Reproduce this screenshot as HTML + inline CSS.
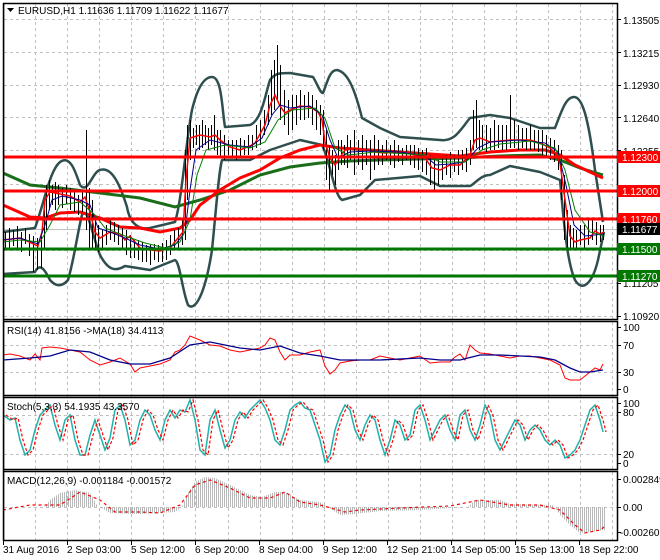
<!DOCTYPE html>
<html><head><meta charset="utf-8"><style>
html,body{margin:0;padding:0;background:#fff;}
svg{display:block;font-family:"Liberation Sans",sans-serif;}
</style></head><body>
<svg width="660" height="560" viewBox="0 0 660 560" xmlns="http://www.w3.org/2000/svg">
<defs>
<pattern id="hist" width="2" height="10" patternUnits="userSpaceOnUse"><rect x="0" y="0" width="1" height="10" fill="#b8b8b8"/></pattern>
<path id="st" d="M3,415 L10,420 L15,418 L20,440 L25,455 L30,450 L35,430 L40,415 L45,410 L50,405 L55,425 L60,440 L65,420 L70,415 L75,440 L80,455 L85,455 L90,435 L95,420 L100,435 L105,450 L110,438 L115,410 L120,405 L125,420 L130,445 L135,440 L140,420 L145,410 L150,415 L155,430 L160,440 L165,420 L170,410 L175,418 L180,410 L185,412 L190,400 L195,420 L200,450 L205,455 L210,420 L215,410 L220,430 L225,448 L230,440 L235,420 L240,412 L245,418 L250,410 L255,405 L260,400 L265,408 L270,420 L275,440 L280,445 L285,430 L290,410 L295,405 L300,402 L305,408 L310,410 L315,425 L320,440 L325,462 L330,455 L335,430 L340,415 L345,405 L350,410 L355,430 L360,440 L365,425 L370,415 L375,420 L380,440 L385,455 L390,440 L395,420 L400,425 L405,440 L410,435 L415,410 L420,405 L425,420 L430,440 L435,430 L440,420 L445,415 L450,430 L455,440 L460,415 L465,410 L470,430 L475,440 L480,425 L485,405 L490,415 L495,440 L500,450 L505,440 L510,430 L515,420 L520,425 L525,440 L530,430 L535,425 L540,430 L545,440 L550,445 L555,440 L560,445 L565,458 L570,455 L575,450 L580,440 L585,425 L590,410 L595,405 L600,420 L603,432"/>
</defs>
<rect width="660" height="560" fill="#fff"/>
<g stroke="#c0c0c0" stroke-dasharray="3,3" stroke-width="1">
<path d="M35.5 4V540M67.5 4V540M99.5 4V540M131.5 4V540M163.5 4V540M195.5 4V540M228.5 4V540M260.5 4V540M292.5 4V540M324.5 4V540M356.5 4V540M388.5 4V540M420.5 4V540M452.5 4V540M484.5 4V540M516.5 4V540M548.5 4V540M580.5 4V540M612.5 4V540"/>
<path d="M4 19.5H617M4 52.5H617M4 85.5H617M4 117.5H617M4 150.5H617M4 184.5H617M4 217.5H617M4 250.5H617M4 283.5H617M4 316.5H617"/>
<path d="M4 345.5H617M4 372.5H617M4 415.5H617M4 454.5H617M4 507.5H617"/>
</g>
<path d="M4 229.5H617" stroke="#c0c0c0"/>
<g fill="none" stroke="#2f4f4f" stroke-width="2.5" stroke-linejoin="round">
<path d="M3,232 L35,228 C45,200 50,170 60,162 C70,155 75,170 80,185 C88,195 92,172 100,170 C112,166 120,185 127,207 C130,225 140,230 150,228 L175,222 C182,200 186,140 192,110 C198,85 205,77 212,77 C222,77 222,110 225,127 L250,125 C262,120 265,95 270,80 C275,73 280,73 290,73 L313,77 C318,85 320,93 323,93 C328,80 330,70 337,70 C348,72 355,90 362,118 L380,128 L400,137 L440,140 C455,142 460,130 470,118 L490,115 L510,118 L540,128 L555,128 C562,110 566,97 574,97 C582,97 588,115 595,170 L603,222"/>
<path d="M3,274 L35,272 C40,262 45,270 50,280 C56,287 62,287 68,280 C74,260 78,230 82,215 C88,205 92,235 100,255 C108,270 115,272 125,266 L150,270 L175,260 C180,262 182,290 188,305 C195,312 205,295 212,250 C216,210 219,170 222,160 L250,160 L270,150 L300,140 L322,145 C330,160 334,195 342,200 L360,195 L375,180 L420,176 L440,186 L470,186 C474,185 480,175 490,175 L510,166 L540,172 L560,180 C563,210 566,260 575,280 C582,292 592,285 598,260 L604,232"/>
</g>
<path d="M3,173 L30,185 L60,188 L100,193 L140,198 L175,207 L200,200 L230,190 L260,175 L290,167 L320,163 L350,161 L380,160 L420,159 L460,158 L500,156 L540,155 L560,160 L580,168 L603,175" fill="none" stroke="#1a6e1a" stroke-width="3"/>
<path d="M3,205 L30,217 L45,218 L60,213 L80,212 L100,218 L120,227 L140,228 L160,232 L180,228 L190,220 L200,205 L220,190 L240,178 L260,170 L280,158 L300,150 L320,145 L340,148 L370,150 L400,152 L430,154 L460,156 L490,152 L520,150 L545,150 L560,155 L575,165 L590,172 L603,178" fill="none" stroke="#f00" stroke-width="3"/>
<g stroke="#000" stroke-width="1" transform="translate(0.5,0)">
<path d="M5 232V250M9 228V248M13 230V246M17 226V250M21 232V252M25 228V244M29 234V256M33 236V272M37 238V270M41 236V268M44 210V250M46 185V230M49 180V210M52 185V205M55 182V210M58 185V205M62 188V208M66 185V204M70 188V210M74 190V212M78 195V215M82 192V212M86 130V230M89 188V250M92 200V248M95 220V250M98 225V252M102 230V250M106 225V245M110 220V240M114 222V242M118 225V245M122 228V250M126 230V255M130 235V258M134 240V258M138 240V260M142 242V262M146 245V262M150 245V265M154 244V260M158 245V262M162 243V262M166 240V260M170 235V255M174 230V250M178 228V248M182 220V245M185 150V240M187 125V200M190 120V160M193 128V148M196 125V145M199 125V150M202 120V148M205 125V145M208 128V150M211 125V145M214 115V150M217 130V155M220 130V158M224 135V160M228 140V155M232 140V158M236 140V160M240 138V158M244 140V155M248 135V155M252 135V150M256 125V148M260 120V145M264 110V135M268 95V125M271 70V115M274 60V110M277 45V100M280 65V120M284 90V125M288 100V135M292 95V130M296 95V125M300 90V120M304 95V120M308 92V118M312 95V125M316 100V130M320 105V135M323 110V150M326 130V180M329 145V190M332 150V175M335 155V185M338 140V170M341 140V165M344 145V165M347 135V168M350 140V160M354 130V175M358 140V165M362 135V170M366 140V165M370 140V180M374 135V170M378 140V165M382 145V165M386 140V160M390 145V165M394 140V168M398 145V162M402 148V165M406 145V160M410 145V165M414 145V168M418 148V170M422 150V172M426 148V175M430 155V185M434 158V190M438 160V185M442 158V180M446 155V175M450 152V178M454 155V172M458 150V175M462 150V170M466 148V172M470 140V165M473 110V150M476 100V148M479 120V150M482 125V150M486 125V152M490 128V150M494 120V150M498 125V148M502 125V150M506 125V150M510 95V148M514 120V148M518 125V150M522 128V148M526 128V150M530 125V150M534 130V150M538 130V152M542 130V155M546 135V158M550 138V160M554 140V162M558 145V170M561 150V200M564 175V240M567 210V250M570 225V250M573 228V248M576 230V250M580 225V245M584 225V248M588 220V245M592 218V240M596 222V245M600 225V242M603 225V240"/>
</g>
<path d="M3,240 L20,238 L38,246 L42,232 L45,200 L50,192 L60,194 L70,196 L80,202 L85,197 L90,212 L95,232 L100,238 L110,232 L120,234 L125,240 L130,236 L140,248 L150,250 L160,251 L170,248 L178,238 L183,232 L186,180 L190,138 L200,135 L210,137 L215,135 L220,140 L230,147 L240,150 L250,146 L255,143 L265,125 L270,105 L275,95 L280,106 L285,113 L290,110 L300,106 L310,107 L318,112 L322,120 L325,142 L330,158 L335,165 L340,157 L345,150 L355,148 L365,150 L375,152 L385,153 L395,152 L405,152 L415,155 L425,158 L432,168 L440,170 L450,165 L460,165 L470,155 L475,140 L480,138 L490,142 L500,141 L510,140 L520,140 L530,140 L540,143 L550,148 L555,153 L560,163 L565,200 L570,236 L575,242 L580,240 L590,238 L595,231 L600,234 L604,232" fill="none" stroke="#f00" stroke-width="1.5"/>
<path d="M3,240 L20,238 L38,244 L45,225 L52,200 L62,196 L80,200 L90,205 L98,228 L110,232 L125,238 L140,245 L160,249 L175,245 L185,232 L190,190 L196,150 L210,140 L230,145 L250,147 L262,138 L272,115 L280,105 L290,108 L310,106 L322,115 L330,140 L338,158 L350,152 L370,151 L400,152 L425,156 L436,165 L450,164 L465,162 L478,148 L490,142 L520,140 L545,143 L558,152 L566,185 L574,225 L585,236 L604,234" fill="none" stroke="#00008b" stroke-width="1"/>
<path d="M3,242 L20,240 L40,242 L50,225 L60,205 L80,202 L95,215 L105,228 L125,236 L145,243 L165,248 L180,242 L190,220 L197,175 L206,150 L225,145 L250,148 L265,142 L278,120 L292,110 L315,108 L325,118 L335,148 L348,155 L375,152 L425,155 L440,162 L465,162 L482,150 L500,144 L530,141 L555,148 L565,170 L575,210 L590,232 L604,236" fill="none" stroke="#008000" stroke-width="1"/>
<g stroke-width="3">
<path d="M4 157H617M4 191H617M4 219H617" stroke="#f00"/>
<path d="M4 249H617M4 276H617" stroke="#007800"/>
</g>
<path d="M3,355 L10,354 L20,356 L30,360 L35,354 L40,360 L42,348 L50,347 L60,348 L70,350 L80,352 L85,356 L90,360 L100,365 L110,362 L120,358 L130,364 L135,372 L140,368 L150,366 L160,364 L170,360 L175,352 L180,350 L185,345 L190,336 L200,340 L210,345 L220,346 L230,350 L240,352 L250,350 L260,348 L265,345 L270,338 L275,340 L280,352 L285,360 L290,355 L300,355 L310,352 L320,350 L325,366 L330,374 L335,370 L340,363 L350,361 L360,360 L370,360 L380,356 L390,358 L400,360 L410,358 L420,356 L430,363 L440,362 L450,362 L455,357 L460,354 L465,360 L470,345 L475,350 L480,353 L490,354 L500,356 L510,358 L520,356 L530,356 L540,358 L550,360 L560,365 L565,378 L570,380 L580,380 L590,372 L595,368 L600,370 L603,364" fill="none" stroke="#f00" stroke-width="1"/>
<path d="M3,360 L30,358 L50,356 L70,350 L90,352 L110,360 L130,364 L150,364 L170,358 L190,345 L210,342 L240,348 L260,350 L280,346 L300,353 L320,356 L340,360 L380,360 L420,358 L440,360 L460,360 L480,355 L500,355 L540,357 L555,360 L570,368 L580,372 L590,372 L603,370" fill="none" stroke="#00008b" stroke-width="1.3"/>
<use href="#st" fill="none" stroke="#20b2aa" stroke-width="1.5"/>
<use href="#st" transform="translate(3,0)" fill="none" stroke="#f00" stroke-width="1.2" stroke-dasharray="3,2"/>
<path d="M3,507 L45,507 L50,500 L60,493 L75,490 L90,493 L98,507 L100,507 L110,513 L140,514 L175,512 L182,507 L187,495 L195,482 L205,477 L215,478 L230,485 L250,495 L262,497 L275,492 L285,492 L300,500 L320,502 L328,507 L340,515 L355,514 L380,511 L420,510 L450,508 L468,507 L475,500 L500,500 L510,504 L552,505 L555,507 L560,515 L570,525 L580,533 L590,532 L605,530 L605,507 Z" fill="url(#hist)"/>
<path d="M3,510 L30,505 L60,505 L80,492 L100,500 L115,512 L140,512 L160,513 L180,505 L195,485 L210,480 L230,488 L250,498 L270,498 L285,492 L300,502 L320,505 L345,512 L360,510 L400,508 L450,506 L480,500 L510,505 L540,505 L560,510 L575,525 L585,533 L600,530 L604,527" fill="none" stroke="#f00" stroke-width="1.2" stroke-dasharray="3,3"/>
<g fill="none" stroke="#000" stroke-width="1.5">
<rect x="3.5" y="3.5" width="614" height="316"/>
<rect x="3.5" y="321.5" width="614" height="74"/>
<rect x="3.5" y="397.5" width="614" height="72"/>
<rect x="3.5" y="471.5" width="614" height="69"/>
</g>
<rect x="0" y="0" width="3" height="560" fill="#fff"/>
<path d="M3.5 3V541" stroke="#000" stroke-width="1.5"/>
<g stroke="#000"><path d="M617 19.5h4M617 52.5h4M617 85.5h4M617 117.5h4M617 150.5h4M617 283.5h4M617 316.5h4M617 327.5h4M617 345.5h4M617 372.5h4M617 389.5h4M617 403.5h4M617 412.5h4M617 454.5h4M617 463.5h4M617 479.5h4M617 507.5h4M617 532.5h4M3.5 541v4M67.5 541v4M131.5 541v4M195.5 541v4M259.5 541v4M323.5 541v4M387.5 541v4M451.5 541v4M515.5 541v4M579.5 541v4"/></g>
<g font-size="10" fill="#000">
<text x="623" y="24">1.13505</text><text x="623" y="57">1.13215</text><text x="623" y="89">1.12930</text><text x="623" y="122">1.12640</text><text x="623" y="155">1.12355</text><text x="623" y="287">1.11205</text><text x="623" y="320">1.10920</text>
<text x="623" y="331">100</text><text x="623" y="349">70</text><text x="623" y="376">30</text><text x="623" y="393">0</text>
<text x="623" y="407">100</text><text x="623" y="416">80</text><text x="623" y="458">20</text><text x="623" y="467">0</text>
<text x="623" y="483">0.002849</text><text x="623" y="511">0.00</text><text x="620" y="536">-0.002605</text>
</g>
<g font-size="10" fill="#fff">
<rect x="617" y="151" width="43" height="12" fill="#f00"/><text x="622" y="161">1.12300</text>
<rect x="617" y="185" width="43" height="12" fill="#f00"/><text x="622" y="195">1.12000</text>
<rect x="617" y="213" width="43" height="12" fill="#f00"/><text x="622" y="223">1.11760</text>
<rect x="617" y="223" width="43" height="12" fill="#000"/><text x="622" y="233">1.11677</text>
<rect x="617" y="243" width="43" height="12" fill="#007800"/><text x="622" y="253">1.11500</text>
<rect x="617" y="270" width="43" height="12" fill="#007800"/><text x="622" y="280">1.11270</text>
</g>
<g font-size="10" fill="#000">
<path d="M7 8h7l-3.5 4z" fill="#000"/>
<text x="18" y="14">EURUSD,H1  1.11636 1.11709 1.11622 1.11677</text>
<text x="7" y="334">RSI(14) 41.8156  -&gt;MA(18) 34.4113</text>
<text x="7" y="410">Stoch(5,3,3) 54.1935 43.3570</text>
<text x="7" y="484">MACD(12,26,9) -0.001184 -0.001572</text>
<text x="3" y="553">31 Aug 2016</text><text x="67" y="553">2 Sep 03:00</text><text x="131" y="553">5 Sep 12:00</text><text x="195" y="553">6 Sep 20:00</text><text x="259" y="553">8 Sep 04:00</text><text x="323" y="553">9 Sep 12:00</text><text x="387" y="553">12 Sep 21:00</text><text x="451" y="553">14 Sep 05:00</text><text x="515" y="553">15 Sep 13:00</text><text x="579" y="553">18 Sep 22:00</text>
</g>
</svg>
</body></html>
